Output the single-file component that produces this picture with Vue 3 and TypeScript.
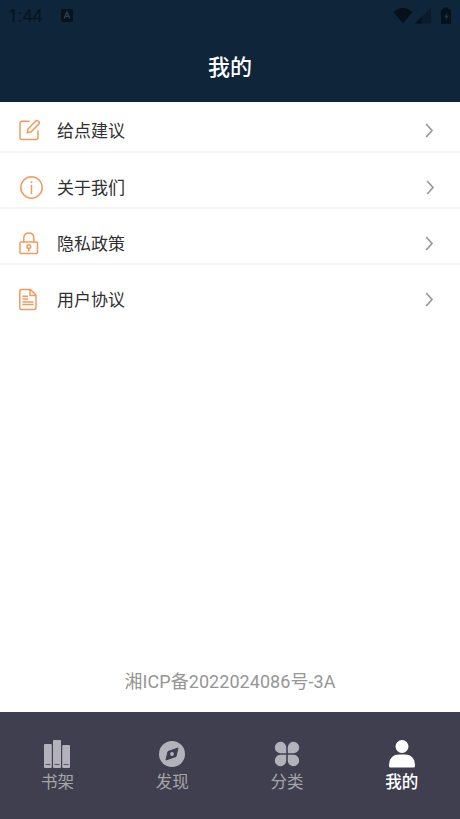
<script setup lang="ts">
type IconName = 'edit' | 'info' | 'lock' | 'document'
type TabIcon = 'books' | 'compass' | 'petals' | 'person'

const items: { label: string; icon: IconName }[] = [
  { label: '给点建议', icon: 'edit' },
  { label: '关于我们', icon: 'info' },
  { label: '隐私政策', icon: 'lock' },
  { label: '用户协议', icon: 'document' },
]
const tabs: { label: string; icon: TabIcon; active?: boolean }[] = [
  { label: '书架', icon: 'books' },
  { label: '发现', icon: 'compass' },
  { label: '分类', icon: 'petals' },
  { label: '我的', icon: 'person', active: true },
]
</script>

<template>
  <div class="screen">
    <header class="header">
      <div class="status">
        <span class="time">1:44</span>
        <svg class="badge" width="12" height="13" viewBox="0 0 12 13">
          <rect width="12" height="13" rx="1.5" fill="#07121c" />
          <path d="M3.2 9.5 6 3l2.8 6.5M4.2 7.3h3.6" fill="none" stroke="#294052" stroke-width="1.3" />
        </svg>
        <svg class="signals" width="60" height="18" viewBox="0 0 60 18">
          <path d="M.5 4Q10 -4 19.500 4L10 15.500Z" transform="translate(0 1)" fill="#06111a" />
          <path d="M22 16 38 0V16Z" transform="translate(0 .5)" fill="#0a1c2b" />
          <path d="M22 16.500 28.500 10V16.500Z" fill="#06111a" />
          <path d="M50.500 1H55V3H57.500V16.500H48.500V3H50.500Z" fill="#06111a" stroke="#06111a" stroke-linejoin="round" />
          <path d="m54.500 5-3.200 5.300h2l-1 4.200 3.500-5.700h-2Z" fill="#1c3446" />
        </svg>
      </div>
      <h1 class="title">我的</h1>
    </header>

    <main class="content">
      <div v-for="item in items" :key="item.label" class="row">
        <div class="icon-box">
          <svg v-if="item.icon === 'edit'" width="22" height="22" viewBox="0 0 22 22" class="line-icon">
            <path d="M10 2.200H3Q1 2.200 1 4.200V18.500Q1 20.500 3 20.500H17Q19 20.500 19 18.500V12" />
            <path d="M16.500 2.200Q18 .7 19.200 2L19.800 2.600Q21 3.900 19.500 5.400L12 13 8.200 13.800 9 10Z" />
          </svg>
          <svg v-else-if="item.icon === 'info'" width="24" height="24" viewBox="0 0 24 24" class="line-icon info">
            <circle cx="12.500" cy="12.500" r="10.700" />
            <path d="M12.500 10.500V18.500" />
            <circle cx="12.500" cy="7.200" r="1" class="dot" />
          </svg>
          <svg v-else-if="item.icon === 'lock'" width="20" height="23" viewBox="0 0 20 23" class="line-icon">
            <rect x="1" y="10" width="17.500" height="11.500" rx="1" />
            <path d="M4.800 10V6.100Q4.800 1 9.800 1T14.800 6.100V10M9.800 16.500V19" />
            <circle cx="9.800" cy="14.600" r="1.900" />
          </svg>
          <svg v-else width="19" height="23" viewBox="0 0 19 23" class="line-icon">
            <path d="M2.500 1.500H11.500L17 7V19.500Q17 21.500 15 21.500H2.500Q.8 21.500.8 19.500V3.500Q.8 1.500 2.500 1.500ZM11 1.500V7.500H17M4 8.200H8.500M4 11H8.500M4 14H14M4 16.600H14" />
          </svg>
        </div>
        <span class="row-label">{{ item.label }}</span>
        <svg class="chevron" :class="{ shifted: item.icon === 'info' }" width="9" height="15" viewBox="0 0 9 15">
          <path d="M1.200 1 7 7.500 1.200 14" />
        </svg>
      </div>
      <p class="record">湘ICP备2022024086号-3A</p>
    </main>

    <nav class="tabs">
      <div v-for="tab in tabs" :key="tab.label" class="tab" :class="{ active: tab.active }">
        <svg width="28" height="30" viewBox="0 0 28 30" fill="currentColor">
          <g v-if="tab.icon === 'books'">
            <rect x="1" y="5" width="7.800" height="24" rx="1" />
            <rect x="10" y="1" width="8" height="28" rx="1" />
            <rect x="19.200" y="6" width="7.800" height="23" rx="1" />
            <path d="M2.500 25.500h4.800M11.500 25.500h5M20.700 25.500h4.800" stroke="#55546a" />
          </g>
          <g v-else-if="tab.icon === 'compass'">
            <circle cx="14" cy="15" r="13" />
            <path d="M20 9 18 17.500 8 21 10 12.500Z" fill="#3f3e50" stroke="#3f3e50" stroke-linejoin="round" />
            <circle cx="14" cy="15" r="1.900" />
          </g>
          <g v-else-if="tab.icon === 'petals'">
            <path d="M13.200 14.200H7A5.700 5.700 0 1 1 13.200 8ZM14.800 14.200V8A5.700 5.700 0 1 1 21 14.200ZM13.200 15.800V22A5.700 5.700 0 1 1 7 15.800ZM14.800 15.800H21A5.700 5.700 0 1 1 14.800 22Z" />
          </g>
          <g v-else>
            <circle cx="14" cy="7.500" r="6.500" />
            <path d="M1 27Q1 15.500 11 15.500H17Q27 15.500 27 27Q27 28.500 25.500 28.500H2.500Q1 28.500 1 27Z" />
          </g>
        </svg>
        <span class="tab-label">{{ tab.label }}</span>
      </div>
    </nav>
  </div>
</template>

<style>
body {
  margin: 0;
}
</style>

<style scoped>
.screen {
  display: flex;
  flex-direction: column;
  height: 819px;
  background: #fff;
  font-family: Roboto, "Noto Sans CJK SC", sans-serif;
}
.header {
  box-sizing: border-box;
  height: 102px;
  background: #0f263a;
}
.status {
  display: flex;
  align-items: center;
  height: 31px;
  padding: 0 7px 0 8px;
  color: #07131d;
}
.time {
  width: 53px;
  font-size: 18px;
  line-height: 31px;
}
.signals {
  margin-left: auto;
}
.title {
  margin: 0;
  padding-top: 21px;
  color: #fff;
  font-size: 22px;
  font-weight: 500;
  line-height: 32px;
  text-align: center;
}
.content {
  display: flex;
  flex: 1;
  flex-direction: column;
}
.row {
  box-sizing: border-box;
  display: flex;
  align-items: center;
  height: 56px;
  padding: 0 26px 0 19px;
  border-bottom: 2px solid #f5f5f5;
}
.row:first-child {
  height: 51px;
  padding-top: 7px;
}
.row:not(:first-child) {
  padding-top: 14px;
}
.row:nth-child(4) {
  border-bottom-color: transparent;
}
.icon-box {
  display: flex;
  align-items: center;
  width: 38px;
}
.line-icon {
  fill: none;
  stroke: #f39a5b;
  stroke-width: 1.5;
  stroke-linecap: round;
  stroke-linejoin: round;
}
.dot {
  fill: #f39a5b;
  stroke: none;
}
.row-label {
  padding-top: 2px;
  color: #303030;
  font-size: 17px;
  line-height: 24px;
}
.chevron {
  margin-left: auto;
  fill: none;
  stroke: #999;
  stroke-width: 1.7;
}
.chevron.shifted {
  margin-right: -1px;
}
.record {
  margin: auto 0 17px;
  color: #969696;
  font-size: 18px;
  letter-spacing: 0.06px;
  line-height: 26px;
  text-align: center;
}
.tabs {
  box-sizing: border-box;
  display: flex;
  height: 107px;
  padding: 27px 1px 0 0;
  background: #3f3f50;
}
.tab {
  display: flex;
  flex: 1;
  flex-direction: column;
  align-items: center;
  color: #b3b2bb;
}
.tab-label {
  padding-top: 2px;
  color: #a5a5a8;
  font-size: 16.5px;
  line-height: 24px;
}
.tab.active,
.active .tab-label {
  color: #fff;
}
.active .tab-label {
  font-weight: 500;
}
</style>
